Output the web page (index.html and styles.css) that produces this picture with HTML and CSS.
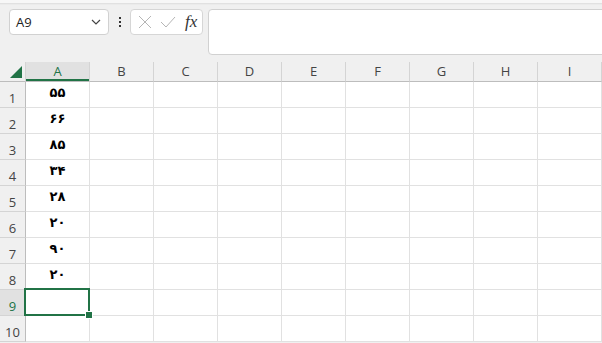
FILE: index.html
```html
<!DOCTYPE html>
<html lang="en">
<head>
  <meta charset="UTF-8" />
  <title>Sheet</title>
  <link rel="stylesheet" href="styles.css">
</head>
<body>
  <div class="topstrip"></div>
  <div class="toolbar">
    <div class="namebox">
      <span>A9</span>
      <svg width="10" height="6" viewBox="0 0 10 6"><path d="M1 1 L5 5 L9 1" fill="none" stroke="#444" stroke-width="1.2"/></svg>
    </div>
    <div class="dots"><i></i><i></i><i></i></div>
    <div class="fbuttons">
      <svg width="14" height="14" viewBox="0 0 14 14"><path d="M1 1 L13 13 M13 1 L1 13" stroke="#b5b5b5" stroke-width="1"/></svg>
      <svg width="16" height="14" viewBox="0 0 16 14"><path d="M1 7 L6 12 L15 2" fill="none" stroke="#b5b5b5" stroke-width="1"/></svg>
      <span class="fx">fx</span>
    </div>
    <div class="formulabar"></div>
  </div>

  <div class="sheet" id="sheet"></div>

  <script>
    const cols = ["A", "B", "C", "D", "E", "F", "G", "H", "I"];
    const values = ["۵۵", "۶۶", "۸۵", "۳۴", "۲۸", "۲۰", "۹۰", "۲۰"];
    const sheet = document.getElementById("sheet");

    function cell(cls, text) {
      const div = document.createElement("div");
      div.className = cls;
      if (text) div.textContent = text;
      sheet.appendChild(div);
      return div;
    }

    // header row
    cell("corner");
    cols.forEach(c => cell(c === "A" ? "colhead active" : "colhead", c));
    cell("colhead rest");

    for (let r = 1; r <= 10; r++) {
      cell(r === 9 ? "rowhead active" : "rowhead", String(r));
      cols.forEach(c => {
        const text = c === "A" ? values[r - 1] : "";
        const div = cell("cell", text);
        if (c === "A" && r === 9) div.classList.add("selected");
      });
      cell("cell rest");
    }
  </script>
</body>
</html>
```

FILE: styles.css
```css
* {
  box-sizing: border-box;
}

body {
  margin: 0;
  background: #f0f0f0;
  font-family: "Open Sans", "DejaVu Sans", sans-serif;
  overflow: hidden;
  width: 602px;
  height: 343px;
}

.topstrip {
  height: 5px;
  background: linear-gradient(#dcdcdc, #f0f0f0);
  border-top: 3px solid #f7f7f7;
}

.toolbar {
  display: flex;
  align-items: flex-start;
  height: 57px;
  padding: 4px 0 0 9px;
}

.namebox {
  width: 100px;
  height: 26px;
  background: #fff;
  border: 1px solid #d1d1d1;
  border-radius: 4px;
  display: flex;
  align-items: center;
  justify-content: space-between;
  padding: 0 7px 0 6px;
  font-size: 13px;
  color: #222;
}

.dots {
  width: 21px;
  height: 26px;
  display: flex;
  flex-direction: column;
  align-items: center;
  justify-content: center;
  gap: 2px;
}

.dots i {
  width: 2px;
  height: 2px;
  background: #333;
}

.fbuttons {
  width: 73px;
  height: 26px;
  background: #fff;
  border: 1px solid #d6d6d6;
  border-radius: 4px;
  display: flex;
  align-items: center;
  gap: 8px;
  padding-left: 7px;
}

.fx {
  font-family: "Liberation Serif", serif;
  font-style: italic;
  font-size: 17px;
  color: #333;
  margin-left: 1px;
}

.formulabar {
  flex: 1;
  height: 46px;
  margin-left: 5px;
  margin-right: -8px;
  background: #fff;
  border: 1px solid #d1d1d1;
  border-radius: 4px;
}

.sheet {
  display: grid;
  grid-template-columns: 26px repeat(9, 64px) 1fr;
  grid-template-rows: 20px repeat(10, 26px);
  background: #fff;
}

.corner {
  background: #f0f0f0;
  border-right: 1px solid #d4d4d4;
  border-bottom: 1px solid #bdbdbd;
  position: relative;
}

.corner::after {
  content: "";
  position: absolute;
  right: 3px;
  bottom: 3px;
  border-left: 12px solid transparent;
  border-bottom: 12px solid #217346;
}

.colhead {
  background: #f0f0f0;
  border-right: 1px solid #d4d4d4;
  border-bottom: 1px solid #bdbdbd;
  font-size: 13px;
  color: #444;
  text-align: center;
  line-height: 19px;
}

.colhead.active {
  background: #e1e1e1;
  color: #217346;
  box-shadow: inset 0 -2px 0 #217346;
}

.colhead.rest {
  border-right: none;
}

.rowhead {
  background: #f0f0f0;
  border-right: 1px solid #bdbdbd;
  border-bottom: 1px solid #d4d4d4;
  font-size: 13px;
  color: #444;
  text-align: center;
  padding-top: 7px;
}

.rowhead.active {
  background: #e1e1e1;
  color: #217346;
}

.cell {
  border-right: 1px solid #e1e1e1;
  border-bottom: 1px solid #e1e1e1;
  font-family: "DejaVu Sans", sans-serif;
  font-weight: bold;
  font-size: 13px;
  color: #000;
  text-align: center;
  line-height: 22px;
  position: relative;
}

.cell.rest {
  border-right: none;
}

.cell.selected::after {
  content: "";
  position: absolute;
  top: -2px;
  left: -2px;
  right: -1px;
  bottom: -1px;
  border: 2px solid #217346;
}

.cell.selected::before {
  content: "";
  position: absolute;
  right: -4px;
  bottom: -4px;
  width: 6px;
  height: 6px;
  background: #217346;
  border: 1px solid #fff;
  z-index: 1;
}
```
